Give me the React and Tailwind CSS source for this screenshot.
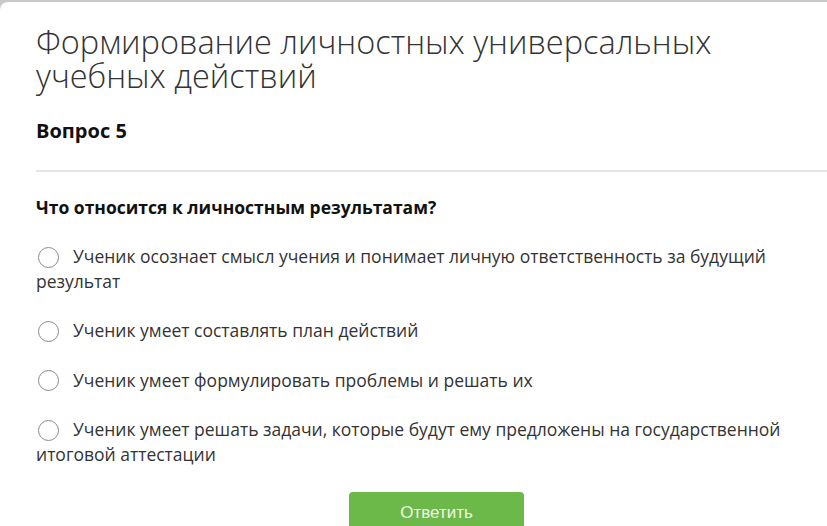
export default function App() {
    const options = [
        'Ученик осознает смысл учения и понимает личную ответственность за будущий результат',
        'Ученик умеет составлять план действий',
        'Ученик умеет формулировать проблемы и решать их',
        'Ученик умеет решать задачи, которые будут ему предложены на государственной итоговой аттестации',
    ];

    return (
        <div className="h-[526px] w-[827px] overflow-hidden bg-[#c9c9c9] pt-[2px] font-['Open_Sans',sans-serif]">
            <div className="h-full rounded-tl-[8px] bg-white pl-[36px] pt-[23px]">
                <h1 className="text-[32.5px] font-light leading-[34px] text-[#333]">
                    Формирование личностных универсальных
                    <br />
                    учебных действий
                </h1>

                <h2 className="mt-[25px] text-[20px] font-bold leading-[26px] text-[#111]">Вопрос 5</h2>

                <div className="mt-[26px] h-[2px] bg-[#e6e6e6]" />

                <p className="mt-[23px] text-[17.5px] font-bold leading-[24px] text-[#111]">
                    Что относится к личностным результатам?
                </p>

                <div className="mt-[25px] flex flex-col gap-[25px] pr-[30px]">
                    {options.map((text) => (
                        <label key={text} className="block text-[17.5px] leading-[24px] text-[#333]">
                            <span className="relative top-[-1px] mr-[14px] ml-[2px] inline-block h-[21px] w-[21px] rounded-full border-[1.5px] border-[#8a8a8a] align-middle" />
                            {text}
                        </label>
                    ))}
                </div>

                <div className="mt-[26px] flex pl-[313px]">
                    <button className="h-[40px] w-[175px] rounded-[4px] bg-[#6cb94a] text-[17px] text-[#eef7e8] font-['Liberation_Sans',sans-serif]">
                        Ответить
                    </button>
                </div>
            </div>
        </div>
    );
}
